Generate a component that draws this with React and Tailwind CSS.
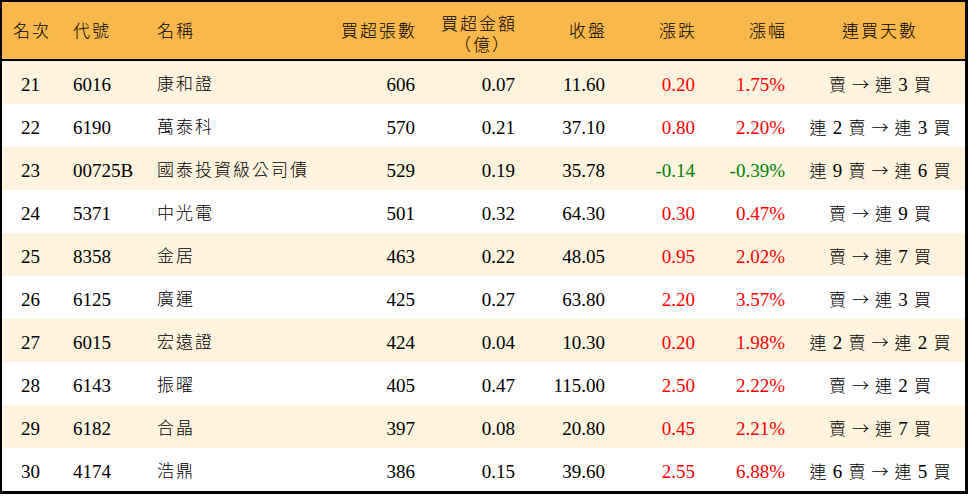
import React from 'react';

const ROWS = [
  ['21', '6016', '康和證', '606', '0.07', '11.60', '0.20', '1.75%', ['賣', '連 3 買']],
  ['22', '6190', '萬泰科', '570', '0.21', '37.10', '0.80', '2.20%', ['連 2 賣', '連 3 買']],
  ['23', '00725B', '國泰投資級公司債', '529', '0.19', '35.78', '-0.14', '-0.39%', ['連 9 賣', '連 6 買']],
  ['24', '5371', '中光電', '501', '0.32', '64.30', '0.30', '0.47%', ['賣', '連 9 買']],
  ['25', '8358', '金居', '463', '0.22', '48.05', '0.95', '2.02%', ['賣', '連 7 買']],
  ['26', '6125', '廣運', '425', '0.27', '63.80', '2.20', '3.57%', ['賣', '連 3 買']],
  ['27', '6015', '宏遠證', '424', '0.04', '10.30', '0.20', '1.98%', ['連 2 賣', '連 2 買']],
  ['28', '6143', '振曜', '405', '0.47', '115.00', '2.50', '2.22%', ['賣', '連 2 買']],
  ['29', '6182', '合晶', '397', '0.08', '20.80', '0.45', '2.21%', ['賣', '連 7 買']],
  ['30', '4174', '浩鼎', '386', '0.15', '39.60', '2.55', '6.88%', ['連 6 賣', '連 5 買']],
];

const grid = 'grid grid-cols-[60px_88px_180px_95px_100px_90px_90px_90px_1fr]';
const font = { fontFamily: '"Liberation Serif", "Noto Sans CJK TC", serif' };

// digits in the streak text are set a touch larger than the CJK glyphs
function Streak({ text }) {
  return text.split(/(\d+)/).map((part, i) =>
    /\d/.test(part) ? <span key={i} className="text-[19px]">{part}</span> : <span key={i}>{part}</span>
  );
}

export default function App() {
  return (
    <div className="w-[968px] h-[496px] bg-white" style={font}>
      <div className="border-t-2 border-l-2 border-r-[3px] border-b-[3px] border-black text-black">
        {/* header */}
        <div className={`${grid} h-[59px] items-center bg-[#f9b84b] border-b-2 border-black text-[17px] tracking-[2px] font-light pt-[3px]`}>
          <div className="text-center">名次</div>
          <div className="pl-[11px]">代號</div>
          <div className="pl-[7px]">名稱</div>
          <div className="text-right pr-[8px]">買超張數</div>
          <div className="text-right pr-[8px] leading-[21px] pt-[6px]">
            <div>買超金額</div>
            <div className="pr-[6px]">（億）</div>
          </div>
          <div className="text-right pr-[8px]">收盤</div>
          <div className="text-right pr-[8px]">漲跌</div>
          <div className="text-right pr-[8px]">漲幅</div>
          <div className="text-center">連買天數</div>
        </div>

        {/* rows */}
        {ROWS.map((r, i) => {
          const neg = r[6].startsWith('-');
          const col = neg ? 'text-[#008000]' : 'text-[#ff0000]';
          return (
            <div key={r[0]} className={`${grid} h-[43px] items-center text-[19px] pt-[5px] ${i % 2 === 0 ? 'bg-[#fef3df]' : 'bg-white'}`}>
              <div className="text-center pr-[3px]">{r[0]}</div>
              <div className="pl-[11px]">{r[1]}</div>
              <div className="pl-[7px] text-[17px] tracking-[2px] font-light">{r[2]}</div>
              <div className="text-right pr-[10px]">{r[3]}</div>
              <div className="text-right pr-[10px]">{r[4]}</div>
              <div className="text-right pr-[10px]">{r[5]}</div>
              <div className={`text-right pr-[10px] ${col}`}>{r[6]}</div>
              <div className={`text-right pr-[10px] ${col}`}>{r[7]}</div>
              <div className="text-center text-[17px] font-light whitespace-nowrap" style={{ wordSpacing: '2px' }}>
                <Streak text={r[8][0]} />
                <span className="mx-[6px]" style={{ fontFamily: '"Noto Sans CJK TC", sans-serif' }}>→</span>
                <Streak text={r[8][1]} />
              </div>
            </div>
          );
        })}
      </div>
    </div>
  );
}
